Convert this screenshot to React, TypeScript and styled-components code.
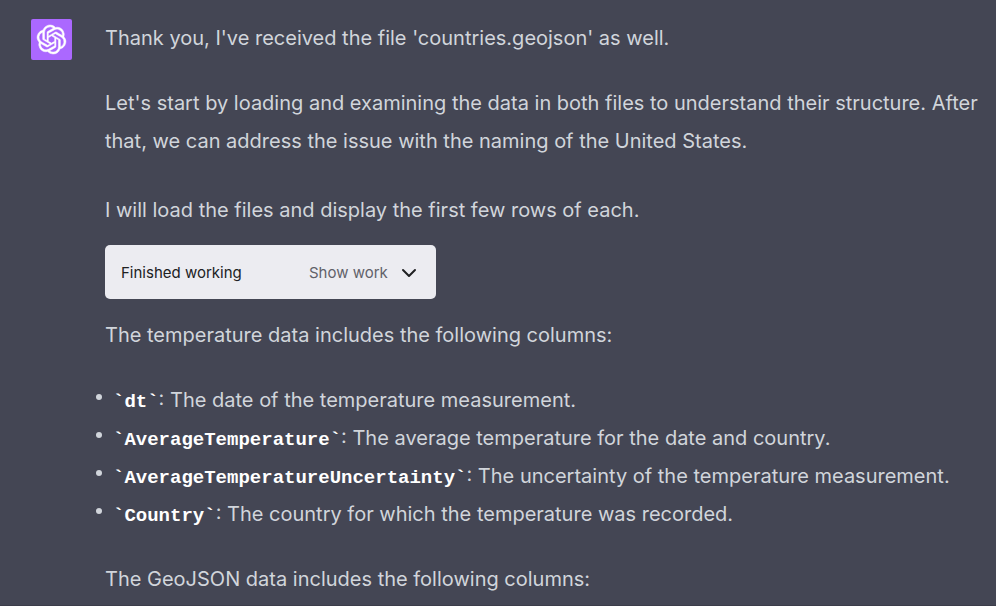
import React from "react";
import styled, { createGlobalStyle } from "styled-components";
import { SiOpenai } from "react-icons/si";

const GlobalStyle = createGlobalStyle`
  *, *::before, *::after { box-sizing: border-box; }
  html, body { margin: 0; background: #444654; }
`;

const Turn = styled.article`
  display: flex;
  align-items: flex-start;
  gap: 33px;
  min-height: 100vh;
  padding: 19px 4px 6px 31px;
  background: #444654;
  color: #d1d5db;
  font-family: Inter, "Liberation Sans", Arial, sans-serif;
  font-size: 20px;
  line-height: 38px;
  border-bottom: 1px solid #3c3d4a;
`;

const Avatar = styled.div`
  display: flex;
  flex: none;
  align-items: center;
  justify-content: center;
  width: 41px;
  height: 41px;
  border-radius: 2px;
  background: #ab68ff;
  color: #ffffff;
`;

const Message = styled.div`
  flex: 1;
  min-width: 0;
`;

const Block = styled.div`
  display: flex;
  flex-direction: column;
  gap: 27px;
`;

const Paragraph = styled.p`
  margin: 0;
`;

const Intro = styled(Paragraph)`
  margin-top: 31px;
`;

const WorkButton = styled.button`
  display: flex;
  align-items: center;
  margin: 16px 0 17px;
  padding: 1px 17px 0 16px;
  height: 54px;
  border: 0;
  border-radius: 5px;
  background: #ececf1;
  color: #202123;
  font-family: Inter, "Liberation Sans", sans-serif;
  font-size: 15px;
  line-height: 24px;
`;

const Status = styled.span`
  min-width: 188px;
  text-align: left;
`;

const Action = styled.span`
  min-width: 90px;
  text-align: left;
  color: #616169;
`;

const ColumnList = styled.ul`
  margin: 0;
  padding: 0 0 0 8px;
  list-style: none;
`;

const ColumnItem = styled.li`
  position: relative;

  &::before {
    content: "";
    position: absolute;
    top: 13px;
    left: -17px;
    width: 6px;
    height: 6px;
    border-radius: 50%;
    background: #d1d5db;
  }
`;

const Code = styled.code`
  color: #ffffff;
  font-family: "Liberation Mono", "Courier New", monospace;
  font-size: 19px;
  font-weight: 700;
  line-height: 19px;
`;

const columns = [
  { name: "dt", text: "The date of the temperature measurement." },
  { name: "AverageTemperature", text: "The average temperature for the date and country." },
  { name: "AverageTemperatureUncertainty", text: "The uncertainty of the temperature measurement." },
  { name: "Country", text: "The country for which the temperature was recorded." },
];

export default function App() {
  return (
    <>
      <GlobalStyle />
      <Turn>
        <Avatar>
          <SiOpenai size={29} stroke="currentColor" strokeWidth={0.4} overflow="visible" aria-hidden="true" />
        </Avatar>
        <Message>
          <Block>
            <Paragraph>Thank you, I've received the file 'countries.geojson' as well.</Paragraph>
            <Paragraph>
              Let's start by loading and examining the data in both files to understand their structure. After
              that, we can address the issue with the naming of the United States.
            </Paragraph>
          </Block>
          <Intro>I will load the files and display the first few rows of each.</Intro>
          <WorkButton type="button" aria-expanded={false}>
            <Status>Finished working</Status>
            <Action>Show work</Action>
            <svg width="20" height="20" viewBox="0 0 20 20" fill="none" stroke="currentColor" strokeWidth="2" strokeLinecap="round" strokeLinejoin="round" aria-hidden="true">
              <path d="M4 7 10 13 16 7" />
            </svg>
          </WorkButton>
          <Block>
            <Paragraph>The temperature data includes the following columns:</Paragraph>
            <ColumnList>
              {columns.map((column) => (
                <ColumnItem key={column.name}>
                  <Code>{"`" + column.name + "`"}</Code>: {column.text}
                </ColumnItem>
              ))}
            </ColumnList>
            <Paragraph>The GeoJSON data includes the following columns:</Paragraph>
          </Block>
        </Message>
      </Turn>
    </>
  );
}
